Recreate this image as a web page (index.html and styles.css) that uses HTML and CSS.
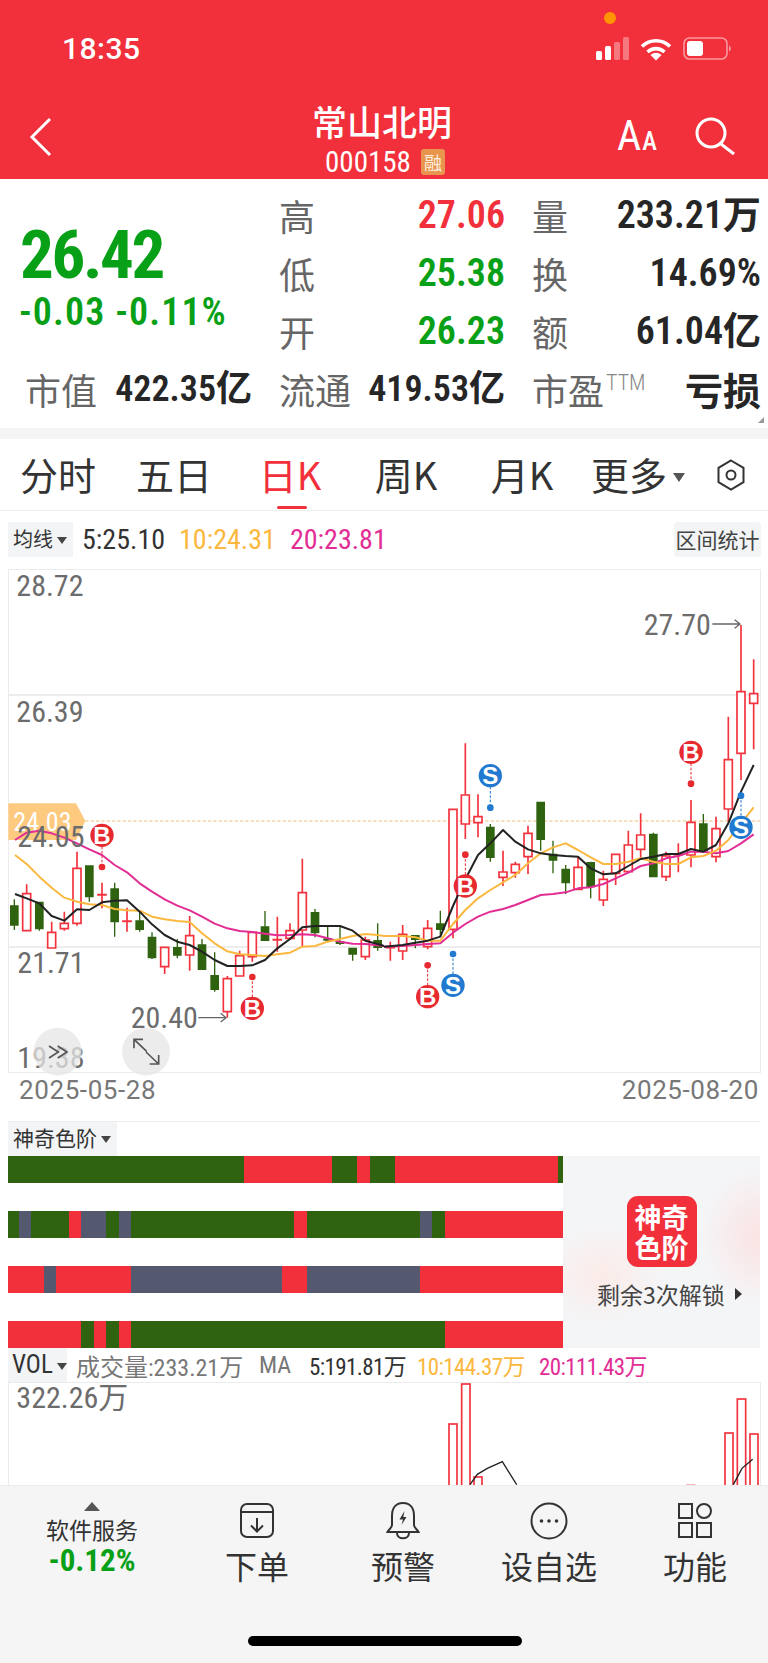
FILE: index.html
```html
<!DOCTYPE html>
<html lang="zh-CN">
<head>
<meta charset="utf-8">
<title>常山北明</title>
<link rel="stylesheet" href="styles.css">
</head>
<body>
<div class="page">
  <header class="top">
    <div class="status">
      <span class="clock">18:35</span>
      <i class="privacy-dot"></i>
      <svg class="status-icons" width="136" height="24" viewBox="0 0 136 24">
        <g fill="#fff">
          <rect x="0" y="14" width="6" height="9" rx="1.500"/>
          <rect x="9" y="9" width="6" height="14" rx="1.500"/>
          <rect x="18" y="5" width="6" height="18" rx="1.500" opacity=".35"/>
          <rect x="27" y="0" width="6" height="23" rx="1.500" opacity=".35"/>
          <path d="M60 23.500l-5.500-5.500a8 8 0 0 1 11 0z"/>
          <rect x="91" y="4" width="16" height="15" rx="3"/>
          <path d="M133 8.500c2.500 .8 2.500 5.200 0 6z" opacity=".5"/>
        </g>
        <path d="M46 9.500a20 20 0 0 1 28 0M51.500 15a12.500 12.500 0 0 1 17 0" fill="none" stroke="#fff" stroke-width="3.600"/>
        <rect x="88" y="1" width="43" height="21" rx="5.500" fill="none" stroke="#fff" stroke-opacity=".5" stroke-width="1.600"/>
      </svg>
    </div>
    <nav class="nav">
      <svg class="back" width="24" height="40" viewBox="0 0 24 40"><path d="M21 2 3 20l18 18" fill="none" stroke="#fff" stroke-width="3"/></svg>
      <div class="title">
        <div class="name">常山北明</div>
        <div class="code">000158<span class="tag">融</span></div>
      </div>
      <div class="nav-actions">
        <span class="aa"><span class="aa-big">A</span><span class="aa-small">A</span></span>
        <svg width="40" height="40" viewBox="0 0 40 40"><circle cx="16" cy="17" r="14" fill="none" stroke="#fff" stroke-width="3"/><path d="m26 28 13 10" fill="none" stroke="#fff" stroke-width="3"/></svg>
      </div>
    </nav>
  </header>

  <section class="stats">
    <div class="quote">
      <div class="price">26.42</div>
      <div class="change">-0.03 -0.11%</div>
    </div>
    <div class="cell"><span class="lab">高</span><span class="val up">27.06</span></div>
    <div class="cell side-col"><span class="lab">量</span><span class="val">233.21万</span></div>
    <div class="cell"><span class="lab">低</span><span class="val down">25.38</span></div>
    <div class="cell side-col"><span class="lab">换</span><span class="val">14.69%</span></div>
    <div class="cell"><span class="lab">开</span><span class="val down">26.23</span></div>
    <div class="cell side-col"><span class="lab">额</span><span class="val">61.04亿</span></div>
    <div class="cell first"><span class="lab">市值</span><span class="val small">422.35亿</span></div>
    <div class="cell"><span class="lab">流通</span><span class="val small">419.53亿</span></div>
    <div class="cell side-col"><span class="lab">市盈<sup class="ttm">TTM</sup></span><span class="val loss">亏损</span></div>
    <i class="corner"></i>
  </section>
  <div class="strip"></div>

  <div class="tabs">
    <span class="tab">分时</span>
    <span class="tab">五日</span>
    <span class="tab active">日K</span>
    <span class="tab">周K</span>
    <span class="tab">月K</span>
    <span class="tab">更多<i class="caret big"></i></span>
    <svg class="hex" width="28" height="32" viewBox="0 0 28 32"><path d="M14 1.500 26.500 8.800v14.400L14 30.500 1.500 23.200V8.800z" fill="none" stroke="#333" stroke-width="2"/><circle cx="14" cy="16" r="4.500" fill="none" stroke="#333" stroke-width="2"/></svg>
  </div>

  <div class="ma-row">
    <span class="picker">均线<i class="caret"></i></span>
    <span class="ma m5">5:25.10</span>
    <span class="ma m10">10:24.31</span>
    <span class="ma m20">20:23.81</span>
    <span class="range">区间统计</span>
  </div>

  <div class="chart">
    <svg class="kline" viewBox="27 1710 2253 1506">
      <path class="grid" d="M27 2085H2280M27 2841H2280"/>
      <g transform="translate(0 2220)">
        <path d="M25 190H228L256 243L228 300H25Z" fill="#fdca80"/>
        <path class="dash" d="M256 243H2280"/>
        <text class="lbl tagtxt" x="40" y="273">24.03</text>
        <path class="down-c" d="M43 478V570M32 498h22v57h-22zM118 487V572M107 487h22v79h-22zM268 378V485M257 378h22v92h-22zM344 428V590M333 447h22v98h-22zM419 515V575M408 543h22v25h-22zM456 577V657M445 592h22v61h-22zM532 597V655M521 623h22v22h-22zM606 597V690M595 615h22v73h-22zM644 637V755M633 707h22v41h-22zM795 513V603M784 561h22v40h-22zM945 507V592M934 518h22v60h-22zM983 560V605M972 597h22v3h-22zM1020 560V615M1009 605h22v5h-22zM1058 625V662M1047 625h22v17h-22zM1133 550V632M1122 602h22v20h-22z"/>
        <path class="up-c" d="M80 433V461M80 572V574M68 461h24v111h-24zM155 545V577M143 577h24v47h-24zM193 515V550M193 566V572M181 550h24v16h-24zM231 335V385M231 550V557M219 385h24v165h-24zM306 428V505M294 464h24v1h-24zM381 503V575M369 543h24v1h-24zM494 680V702M482 622h24v58h-24zM569 528V587M569 645V692M557 587h24v58h-24zM682 708V716M682 815V833M670 716h24v99h-24zM719 632V647M707 647h24v61h-24zM757 650V665M745 577h24v73h-24zM832 530V635M820 599h24v1h-24zM870 550V572M870 595V600M858 572h24v23h-24zM907 356V458M907 570V620M895 458h24v112h-24zM1096 590V600M1096 650V660M1084 600h24v50h-24z"/>
        <polyline class="l20" points="45,300 80,278 118,272 155,280 193,293 231,310 268,328 306,345 344,375 381,397 419,430 456,455 494,478 532,497 569,511 606,530 644,551 682,565 719,573 757,576 795,581 832,586 870,585 907,583 945,585 983,595 1020,605 1058,611 1096,612 1133,616 1152,618"/>
        <polyline class="l10" points="45,345 80,372 118,410 155,443 193,473 231,485 268,493 306,495 344,507 381,511 419,512 456,530 494,538 532,543 569,546 606,580 644,610 682,634 719,643 757,645 795,648 832,643 870,638 907,620 945,618 983,605 1020,597 1058,588 1096,582 1133,585 1152,588"/>
        <polyline class="l5" points="45,462 80,475 118,490 155,528 193,542 231,508 268,510 306,487 344,482 381,481 419,515 456,553 494,585 532,605 569,615 606,635 644,660 682,678 719,678 757,676 795,660 832,625 870,597 907,562 945,558 983,558 1020,558 1058,572 1096,602 1133,612 1152,618"/>
        <path class="dash-b" d="M306 320V381M757 711V772"/>
        <circle class="b" cx="306" cy="381" r="10"/>
        <circle class="b" cx="757" cy="711" r="10"/>
        <text class="lbl" x="52" y="322">24.05</text>
        <circle class="b" cx="306" cy="286" r="35"/><text class="mk" x="306" y="312">B</text>
        <circle class="b" cx="757" cy="805" r="35"/><text class="mk" x="757" y="831">B</text>
        <text class="lbl" x="52" y="700">21.71</text>
        <text class="lbl" x="52" y="984">19.38</text>
        <text class="lbl" x="392" y="865">20.40</text>
        <path class="arrow" d="M595 833H678M662 820L678 833L662 846"/>
        <circle class="fab" cx="173" cy="935" r="72"/>
        <circle class="fab" cx="438" cy="935" r="72"/>
        <path class="fab-i" d="M147 918l28 18-28 18M173 918l28 18-28 18"/>
        <path class="fab-i" d="M402 925V898H429M402 898L440 934M476 945V972H449M476 972L438 936"/>
      </g>
      <g transform="translate(1152 1800)">
        <path class="down-c" d="M94 1005V1045M83 1007h22v11h-22zM169 932V1010M158 972h22v16h-22zM319 672V785M308 682h22v90h-22zM470 605V752M459 607h22v111h-22zM507 722V820M496 763h22v17h-22zM545 795V882M534 808h22v40h-22zM620 785V895M609 788h22v72h-22zM808 698V832M797 703h22v127h-22zM958 642V755M947 672h22v80h-22z"/>
        <path class="up-c" d="M19 1025V1082M7 1042h24v1h-24zM56 975V1003M56 1053V1080M44 1003h24v50h-24zM131 960V985M131 1040V1048M119 985h24v55h-24zM207 988V1015M195 628h24v360h-24zM244 430V585M244 672V717M232 585h24v87h-24zM282 583V650M282 668V712M270 650h24v18h-24zM357 752V816M357 832V858M345 816h24v16h-24zM394 785V793M394 818V833M382 793h24v25h-24zM432 677V700M432 770V822M420 700h24v70h-24zM582 770V802M570 802h24v66h-24zM658 812V838M658 900V918M646 838h24v62h-24zM695 820V855M683 763h24v57h-24zM733 692V735M721 735h24v80h-24zM770 640V705M770 748V775M758 705h24v43h-24zM846 755V768M846 830V843M834 768h24v62h-24zM883 730V817M871 763h24v1h-24zM921 600V667M921 765V802M909 667h24v98h-24zM996 650V686M996 770V787M984 686h24v84h-24zM1033 350V479M1033 627V665M1021 479h24v148h-24zM1071 75V275M1071 460V540M1059 275h24v185h-24zM1109 178V281M1109 310V448M1097 281h24v29h-24z"/>
        <polyline class="l20" points="0,1040 56,1038 94,1035 131,1032 169,1030 207,998 244,972 282,950 319,935 357,927 394,915 432,900 470,885 507,882 545,877 582,865 620,862 658,852 695,835 733,818 770,798 808,790 846,775 883,768 921,755 958,755 996,760 1033,753 1071,730 1109,703"/>
        <polyline class="l10" points="0,1008 56,1008 94,1012 131,1022 169,1022 207,972 244,930 282,895 319,870 357,847 394,825 432,790 470,760 507,742 545,730 582,750 620,772 658,792 695,792 733,785 770,775 808,785 846,792 883,792 921,772 958,768 996,752 1033,720 1071,670 1109,622"/>
        <polyline class="l5" points="0,1040 56,1035 94,1028 131,1022 169,1010 207,918 244,838 282,765 319,730 357,690 394,725 432,748 470,760 507,765 545,768 582,770 620,805 658,823 695,820 733,798 770,777 808,770 846,762 883,762 921,747 958,755 996,735 1033,670 1071,575 1109,495"/>
        <path class="dash-b" d="M131 1096V1160M244 764V830M921 490V551"/>
        <path class="dash-s" d="M207 1062V1125M319 560V623M1071 587V650"/>
        <circle class="b" cx="131" cy="1096" r="10"/>
        <circle class="b" cx="244" cy="764" r="10"/>
        <circle class="b" cx="921" cy="551" r="10"/>
        <circle class="s" cx="207" cy="1062" r="10"/>
        <circle class="s" cx="319" cy="623" r="10"/>
        <circle class="s" cx="1071" cy="587" r="10"/>
        <circle class="b" cx="131" cy="1190" r="35"/><text class="mk" x="131" y="1216">B</text>
        <circle class="s" cx="207" cy="1156" r="35"/><text class="mk" x="207" y="1182">S</text>
        <circle class="b" cx="244" cy="858" r="35"/><text class="mk" x="244" y="884">B</text>
        <circle class="s" cx="319" cy="527" r="35"/><text class="mk" x="319" y="553">S</text>
        <circle class="b" cx="921" cy="457" r="35"/><text class="mk" x="921" y="483">B</text>
        <circle class="s" cx="1071" cy="682" r="35"/><text class="mk" x="1071" y="708">S</text>
        <text class="lbl" x="779" y="104">27.70</text>
        <path class="arrow" d="M985 72H1068M1052 59L1068 72L1052 85"/>
      </g>
      <text class="lbl" x="49" y="1787">28.72</text>
      <text class="lbl" x="49" y="2165">26.39</text>
    </svg>
  </div>
  <div class="dates"><span>2025-05-28</span><span>2025-08-20</span></div>

  <section class="magic">
    <div class="magic-head"><span class="picker wide">神奇色阶<i class="caret"></i></span></div>
    <div class="magic-body">
      <div class="bars">
        <div class="bar"><i class="g" style="flex-grow:482"></i><i class="r" style="flex-grow:180"></i><i class="g" style="flex-grow:51"></i><i class="r" style="flex-grow:25"></i><i class="g" style="flex-grow:51"></i><i class="r" style="flex-grow:333"></i><i class="g" style="flex-grow:11"></i></div>
        <div class="bar"><i class="g" style="flex-grow:22"></i><i class="n" style="flex-grow:25"></i><i class="g" style="flex-grow:77"></i><i class="r" style="flex-grow:26"></i><i class="n" style="flex-grow:50"></i><i class="g" style="flex-grow:27"></i><i class="n" style="flex-grow:25"></i><i class="g" style="flex-grow:332"></i><i class="r" style="flex-grow:27"></i><i class="g" style="flex-grow:230"></i><i class="n" style="flex-grow:25"></i><i class="g" style="flex-grow:26"></i><i class="r" style="flex-grow:241"></i></div>
        <div class="bar"><i class="r" style="flex-grow:73"></i><i class="n" style="flex-grow:25"></i><i class="r" style="flex-grow:154"></i><i class="n" style="flex-grow:307"></i><i class="r" style="flex-grow:52"></i><i class="n" style="flex-grow:230"></i><i class="r" style="flex-grow:292"></i></div>
        <div class="bar"><i class="r" style="flex-grow:149"></i><i class="g" style="flex-grow:26"></i><i class="r" style="flex-grow:25"></i><i class="g" style="flex-grow:27"></i><i class="r" style="flex-grow:25"></i><i class="g" style="flex-grow:640"></i><i class="r" style="flex-grow:241"></i></div>
      </div>
      <div class="promo">
        <div class="promo-logo">神奇<br>色阶</div>
        <div class="promo-text">剩余3次解锁<i class="caret side"></i></div>
      </div>
    </div>
  </section>

  <div class="vol-row">
    <span class="picker vol">VOL<i class="caret"></i></span>
    <span class="v-total">成交量:233.21万</span>
    <span class="v-ma">MA</span>
    <span class="v-5">5:191.81万</span>
    <span class="v-10">10:144.37万</span>
    <span class="v-20">20:111.43万</span>
  </div>
  <div class="vol-chart">
    <svg class="volume" viewBox="27 4149 2253 306">
      <g class="vbar">
        <rect x="1347" y="4272" width="24" height="300"/>
        <rect x="1385" y="4152" width="25" height="400"/>
        <rect x="1422" y="4431" width="24" height="100"/>
        <rect x="2175" y="4299" width="24" height="300"/>
        <rect x="2212" y="4197" width="25" height="400"/>
        <rect x="2250" y="4302" width="24" height="300"/>
      </g>
      <rect class="vfaint" x="2058" y="4452" width="28" height="20"/>
      <polyline class="vline" points="1410,4454 1432,4423 1462,4405 1507,4385 1550,4454"/>
      <polyline class="vline" points="2200,4454 2226,4405 2258,4378"/>
      <text class="lbl" x="49" y="4223">322.26万</text>
    </svg>
  </div>

  <footer class="dock">
    <div class="dock-row">
      <div class="service">
        <i class="tri"></i>
        <div class="service-name">软件服务</div>
        <div class="service-val">-0.12%</div>
      </div>
      <div class="action">
        <svg width="40" height="38" viewBox="0 0 40 38"><g fill="none" stroke="#333" stroke-width="2"><rect x="4" y="2" width="32" height="33" rx="6"/><path d="M4 10H36M20 16V29M14 23.500L20 29.500L26 23.500"/></g></svg>
        <span>下单</span>
      </div>
      <div class="action">
        <svg width="40" height="38" viewBox="0 0 40 38"><g fill="none" stroke="#333" stroke-width="2"><path d="M20 1C12 1 9 7 9 14V23C9 26 6 27 4.500 30H35.500C34 27 31 26 31 23V14C31 7 28 1 20 1Z"/><path d="M14 31C14 38 26 38 26 31"/></g><path d="M21.500 9 16.500 17.500H20L18.500 23 23.500 15H20.300Z" fill="#333"/></svg>
        <span>预警</span>
      </div>
      <div class="action">
        <svg width="40" height="38" viewBox="0 0 40 38"><circle cx="20" cy="19" r="17.500" fill="none" stroke="#333" stroke-width="2"/><g fill="#333"><circle cx="12.500" cy="19" r="1.800"/><circle cx="20" cy="19" r="1.800"/><circle cx="27.500" cy="19" r="1.800"/></g></svg>
        <span>设自选</span>
      </div>
      <div class="action">
        <svg width="40" height="38" viewBox="0 0 40 38"><g fill="none" stroke="#333" stroke-width="2"><rect x="4" y="2" width="13" height="14"/><circle cx="29" cy="9" r="7"/><rect x="4" y="21" width="13" height="14"/><rect x="22" y="21" width="14" height="14"/></g></svg>
        <span>功能</span>
      </div>
    </div>
    <div class="home-indicator"></div>
  </footer>
</div>
</body>
</html>
```

FILE: styles.css
```css
:root {
  --red: #f2303b;
  --price-green: #08a016;
  --candle-green: #2f6310;
  --slate: #54596f;
  --orange: #fbb83f;
  --magenta: #e22d94;
}
* { box-sizing: border-box; }
html, body { margin: 0; padding: 0; background: #fff; }
body {
  font-family: Roboto, "Noto Sans CJK SC", sans-serif;
  font-stretch: 75%;
  color: #222;
  white-space: nowrap;
}
i { font-style: normal; }
.page {
  position: relative;
  width: 768px;
  height: 1663px;
  overflow: hidden;
  display: flex;
  flex-direction: column;
}

/* Header */
.top { background: var(--red); color: #fff; height: 179px; flex: none; }
.status {
  position: relative;
  height: 98px;
  padding-left: 62px;
  display: flex;
  align-items: center;
  justify-content: space-between;
}
.clock { font: 500 30px/1 Roboto, sans-serif; letter-spacing: .5px; }
.privacy-dot {
  position: absolute;
  left: 604px;
  top: 12px;
  width: 12px;
  height: 12px;
  border-radius: 50%;
  background: #ff9500;
}
.status-icons { margin-right: 36px; }
.nav {
  height: 81px;
  display: grid;
  grid-template-columns: 1fr auto 1fr;
  align-items: start;
  padding: 0 33px 0 29px;
}
.back { margin-top: 19px; }
.title { text-align: center; }
.name { font: 500 35px/46px "Noto Sans CJK SC", sans-serif; }
.code { font-size: 29px; line-height: 34px; display: flex; justify-content: center; align-items: center; margin-top: 1px; padding-left: 6px; }
.tag {
  margin-left: 10px;
  width: 24px;
  height: 26px;
  border-radius: 3px;
  background: #e8954e;
  color: #fdeede;
  font: 400 18px/26px "Noto Sans CJK SC", sans-serif;
  text-align: center;
}
.nav-actions { display: flex; justify-content: flex-end; align-items: flex-start; gap: 38px; margin-top: 18px; }
.aa { display: flex; align-items: baseline; height: 36px; line-height: 36px; gap: 1px; margin-top: 2px; }
.aa-big { font-size: 42px; font-weight: 400; }
.aa-small { font-size: 25px; font-weight: 500; }

/* Stats */
.stats {
  position: relative;
  flex: none;
  height: 249px;
  padding: 7px 11px 10px 20px;
  display: grid;
  grid-template-columns: 262px 223px 252px;
  grid-template-rows: repeat(4, 58px);
}
.quote { grid-column: 1; grid-row: 1 / 4; padding-top: 37px; color: var(--price-green); }
.price { font-size: 67px; line-height: 64px; font-weight: 700; letter-spacing: -2.400px; }
.change { font-size: 38px; line-height: 34px; margin-top: 8px; font-weight: 600; letter-spacing: 1.100px; margin-left: -1px; }
.cell { display: flex; align-items: center; justify-content: space-between; }
.cell.side-col { margin-left: 30px; margin-right: -4px; }
.cell.first { padding: 0 30px 0 5px; }
.lab {
  font: 400 36px/58px "Noto Sans CJK SC", sans-serif;
  color: #666;
  margin-left: -3px;
}
.cell.first .lab { margin-left: 0; }
.val { font-size: 38px; line-height: 60px; font-weight: 600; color: #262626; }
.val.small { font-size: 36px; }
.val.up { color: var(--red); }
.val.down { color: var(--price-green); }
.val.loss { font: 700 38px/58px "Noto Sans CJK SC", sans-serif; }
.ttm { font: 300 22px/1 Roboto, sans-serif; font-stretch: 75%; color: #888; vertical-align: 15px; margin-left: 2px; }
.corner {
  position: absolute;
  right: 4px;
  bottom: 5px;
  border-style: solid;
  border-width: 0 0 6px 6px;
  border-color: transparent transparent #999 transparent;
}
.strip { height: 11px; flex: none; background: #f5f5f5; }

/* Tabs */
.tabs {
  flex: none;
  height: 72px;
  display: flex;
  align-items: center;
  border-bottom: 1px solid #eceded;
}
.tab {
  position: relative;
  width: 116px;
  height: 71px;
  text-align: center;
  font: 400 38px/69px "Noto Sans CJK SC", sans-serif;
  color: #333;
}
.tab.active { color: var(--red); }
.tab.active::after {
  content: "";
  position: absolute;
  left: 45px;
  bottom: 1px;
  width: 30px;
  height: 3px;
  border-radius: 2px;
  background: var(--red);
}
.hex { margin-left: 21px; }
.caret {
  display: inline-block;
  width: 0;
  height: 0;
  border-style: solid;
  border-width: 7px 5px 0;
  border-color: #444 transparent transparent;
  margin-left: 4px;
  vertical-align: 3px;
}
.caret.big { border-width: 9px 6.500px 0; border-top-color: #555; margin-left: 6px; vertical-align: 8px; }
.caret.side { border-width: 6px 0 6px 7px; border-color: transparent transparent transparent #333; margin-left: 10px; vertical-align: 4px; }

/* Moving average row */
.ma-row {
  flex: none;
  height: 58px;
  padding: 11px 7px 0 8px;
  display: flex;
  align-items: flex-start;
}
.picker {
  display: inline-block;
  height: 35px;
  background: #f2f4f5;
  padding-left: 5px;
  font: 400 20px/34px "Noto Sans CJK SC", sans-serif;
  color: #333;
}
.ma-row .picker { width: 65px; }
.ma { font-size: 28px; line-height: 35px; margin-right: 14px; }
.ma-row .picker + .ma { margin-left: 9px; }
.m5 { color: #333; }
.m10 { color: var(--orange); }
.m20 { color: var(--magenta); }
.range {
  margin-left: auto;
  height: 35px;
  width: 87px;
  text-align: center;
  border-radius: 4px;
  background: #f2f4f5;
  font: 400 21px/35px "Noto Sans CJK SC", sans-serif;
  color: #444;
}

/* Chart */
.chart {
  flex: none;
  margin-left: 8px;
  width: 753px;
  height: 504px;
  border: 1px solid #ebebeb;
}
.kline, .volume { display: block; width: 751px; overflow: visible; }
.kline { height: 502px; }
.grid { stroke: #e8e8e8; stroke-width: 5; fill: none; }
.dash { stroke: #f3d5a5; stroke-width: 4; stroke-dasharray: 10 6; fill: none; }
.down-c { fill: var(--candle-green); stroke: var(--candle-green); stroke-width: 4; }
.up-c { fill: #fff; stroke: #f2323d; stroke-width: 5; }
.l5, .l10, .l20 { fill: none; stroke-width: 6; stroke-linejoin: round; }
.l5 { stroke: #222; }
.l10 { stroke: var(--orange); }
.l20 { stroke: var(--magenta); }
.lbl { font-size: 90px; fill: #6c6c6c; }
.tagtxt { fill: #fff; font-size: 78px; }
.arrow { fill: none; stroke: #666; stroke-width: 4; }
.b { fill: #e62a30; }
.s { fill: #2179d0; }
.dash-b, .dash-s { fill: none; stroke-width: 3; stroke-dasharray: 8 5; }
.dash-b { stroke: #e62a30; }
.dash-s { stroke: #2179d0; }
.mk {
  font: 700 72px "Liberation Sans", sans-serif;
  fill: #fff;
  text-anchor: middle;
}
.fab { fill: #e6e6e6; fill-opacity: .75; }
.fab-i { fill: none; stroke: #555; stroke-width: 5; }
.dates {
  flex: none;
  height: 48px;
  padding: 0 9px 0 19px;
  display: flex;
  justify-content: space-between;
  font-size: 26px;
  font-stretch: 100%;
  line-height: 34px;
  letter-spacing: .6px;
  color: #777;
}

/* Magic colour scale */
.magic { flex: none; margin: 0 8px; border-top: 1px solid #eee; }
.magic-head { height: 34px; }
.picker.wide { display: block; width: 109px; height: 34px; font-size: 21px; line-height: 31px; }
.magic-body { display: flex; height: 192px; }
.bars { width: 555px; display: flex; flex-direction: column; justify-content: space-between; }
.bar { display: flex; height: 27px; }
.bar i { display: block; flex-basis: 0; }
.g { background: #2f6310; }
.r { background: var(--red); }
.n { background: var(--slate); }
.promo {
  flex: 1;
  display: flex;
  flex-direction: column;
  align-items: center;
  padding-top: 40px;
  background:
    radial-gradient(ellipse 60px 70px at 100% 42%, #fbe3e3, transparent),
    radial-gradient(ellipse 60px 50px at 20% 62%, #fbebe8, transparent),
    #f4f5f7;
}
.promo-logo {
  width: 70px;
  height: 71px;
  border-radius: 11px;
  background: var(--red);
  color: #fff;
  text-align: center;
  font: 700 27px/30px "Noto Sans CJK SC", sans-serif;
  padding-top: 6px;
}
.promo-text {
  margin-top: 13px;
  margin-left: 16px;
  font: 400 23px/28px "Noto Sans CJK SC", sans-serif;
  color: #444;
}

/* Volume */
.vol-row {
  flex: none;
  height: 34px;
  padding-left: 8px;
  display: flex;
  align-items: center;
  font-size: 24px;
}
.picker.vol { width: 59px; height: 34px; font: 400 25px/34px Roboto, sans-serif; font-stretch: 75%; padding-left: 4px; margin-right: 9px; }
.v-total { color: #777; width: 183px; }
.v-ma { color: #777; width: 50px; }
.v-5 { color: #333; width: 108px; }
.v-10 { color: var(--orange); width: 122px; }
.v-20 { color: var(--magenta); }
.v-5, .v-10, .v-20 { font-size: 23px; letter-spacing: -.6px; }
.vol-chart {
  flex: none;
  margin-left: 8px;
  width: 753px;
  height: 103px;
  border: 1px solid #ebebeb;
  border-bottom: 0;
}
.volume { height: 102px; }
.vbar rect { fill: #fff; stroke: #f2323d; stroke-width: 5; }
.vfaint { fill: #ffb3b6; }
.vline { fill: none; stroke: #222; stroke-width: 4; }

/* Dock */
.dock {
  flex: 1;
  position: relative;
  background: #f5f5f5;
  border-top: 1px solid #ececec;
  color: #333;
}
.dock-row {
  display: grid;
  grid-template-columns: 184px repeat(4, 146px);
  padding-top: 16px;
}
.service { text-align: center; }
.tri {
  display: block;
  width: 0;
  margin: 0 auto;
  border-style: solid;
  border-width: 0 8px 9px;
  border-color: transparent transparent #555;
}
.service-name { font: 400 23px/32px "Noto Sans CJK SC", sans-serif; margin-top: 2px; }
.service-val { font-size: 31px; line-height: 30px; font-weight: 700; color: var(--price-green); margin-top: 1px; }
.action { display: flex; flex-direction: column; align-items: center; }
.action span { font: 400 32px/44px "Noto Sans CJK SC", sans-serif; margin-top: 3px; }
.home-indicator {
  position: absolute;
  left: 248px;
  top: 150px;
  width: 274px;
  height: 10px;
  border-radius: 5px;
  background: #000;
}
```
